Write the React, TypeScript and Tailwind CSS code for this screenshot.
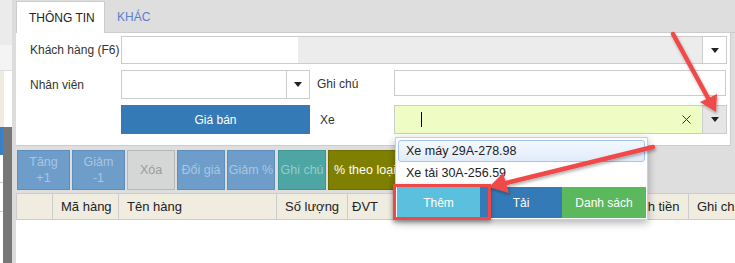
import React from 'react';

const Tri = () => (
  <svg width="8" height="5" viewBox="0 0 8 5">
    <polygon points="0,0 8,0 4,5" fill="#222" />
  </svg>
);

const tools = [
  { label: ['Tăng', '+1'], cls: 'w-[53px] bg-[#6e9dca] border-[#5e8dbc] text-[#a9c6e2]' },
  { label: ['Giảm', '-1'], cls: 'ml-[2px] w-[53px] bg-[#6e9dca] border-[#5e8dbc] text-[#a9c6e2]' },
  { label: ['Xóa'], cls: 'ml-[2px] w-[48px] bg-[#d5d6d6] border-[#b7b7b7] text-[#9b9b9b]' },
  { label: ['Đổi giá'], cls: 'ml-[2px] w-[48px] bg-[#6e9dca] border-[#5e8dbc] text-[#a9c6e2]' },
  { label: ['Giảm %'], cls: 'ml-[2px] w-[48px] bg-[#6e9dca] border-[#5e8dbc] text-[#a9c6e2]' },
  { label: ['Ghi chú'], cls: 'ml-[3px] w-[48px] bg-[#4da6a3] border-[#3e9793] text-[#95ccc9]' },
  { label: ['% theo loại'], cls: 'ml-[2px] w-[74px] bg-[#808000] border-[#6d6d00] text-white' },
];

// columns hidden behind the popup keep no caption
const cols = [
  { t: '', cls: 'w-[36px]' },
  { t: 'Mã hàng', cls: 'w-[66px] pl-[8px]' },
  { t: 'Tên hàng', cls: 'w-[158px] pl-[8px]' },
  { t: 'Số lượng', cls: 'w-[71px] pl-[8px]' },
  { t: 'ĐVT', cls: 'w-[62px] pl-[4px]' },
  { t: '', cls: 'w-[100px] pl-[8px]' },
  { t: '', cls: 'w-[100px] pl-[8px]' },
  { t: 'Thành tiền', cls: 'w-[79px] pl-[8px]' },
  { t: 'Ghi chú', cls: 'w-[80px] pl-[8px]' },
];

export default function App() {
  return (
    <div className="relative w-[735px] h-[263px] overflow-hidden bg-[#dedede] font-['Liberation_Sans',Arial,sans-serif] text-[12px] text-[#333]">
      <div className="flex h-full">
        {/* background window strip */}
        <div className="flex w-[16px] h-full shrink-0">
          <div className="flex flex-col w-[12px] h-full">
            <div className="h-[45px] bg-[#ebebeb]" />
            <div className="h-[26px] bg-[#f4f4f4] border-b border-[#dddddd]" />
            <div className="flex h-[56px]">
              <div className="w-[4px] bg-[#f0ece0]" />
              <div className="flex-1 bg-white" />
            </div>
            <div className="flex flex-1">
              <div className="flex flex-col w-[3px]">
                <div className="h-[28px] bg-[#3a7fc4]" />
                <div className="h-[28px] bg-white border-b border-[#cccccc]" />
                <div className="h-[29px] bg-white border-b border-[#cccccc]" />
                <div className="flex-1 bg-white" />
              </div>
              <div className="flex-1 bg-[#777777]" />
            </div>
          </div>
          <div className="w-[4px] h-full bg-[#dcdcdc]" />
        </div>

        {/* main */}
        <div className="flex flex-col flex-1 min-w-0">
          <div className="flex items-end h-[33px] border-b border-[#cccccc]">
            <div className="flex items-center w-[89px] h-[32px] -mb-px pl-[12px] bg-white border-t border-l border-r border-[#cccccc] text-[#222]">
              THÔNG TIN
            </div>
            <div className="flex items-center h-[31px] pl-[12px] text-[#5a80c8]">KHÁC</div>
          </div>

          <div className="w-[715px] h-[113px] bg-white border-r border-b border-[#cccccc] pl-[14px] pt-[3px]">
            <div className="flex items-center h-[28px]">
              <div className="w-[91px]">Khách hàng (F6)</div>
              <div className="flex w-[582px] h-[28px] border border-[#cccccc]">
                <div className="w-[176px] bg-white" />
                <div className="flex-1 bg-[#ececec]" />
              </div>
              <div className="flex items-center justify-center w-[24px] h-[28px] border border-l-0 border-[#cccccc] bg-white">
                <Tri />
              </div>
            </div>

            <div className="flex items-start mt-[6px] h-[29px]">
              <div className="w-[91px] h-[29px] flex items-center">Nhân viên</div>
              <div className="flex w-[189px] h-[29px] border border-[#cccccc]">
                <div className="flex-1" />
                <div className="flex items-center justify-center w-[23px] border-l border-[#cccccc]">
                  <Tri />
                </div>
              </div>
              <div className="w-[84px] h-[27px] pl-[7px] flex items-center">Ghi chú</div>
              <div className="w-[332px] h-[26px] border border-[#cccccc]" />
            </div>

            <div className="flex items-center mt-[6px] h-[29px]">
              <div className="w-[91px]" />
              <div className="flex items-center justify-center w-[189px] h-[29px] bg-[#337ab7] text-white">Giá bán</div>
              <div className="w-[84px] pl-[10px]">Xe</div>
              <div className="flex items-center w-[309px] h-[29px] bg-[#effcc4] border border-[#cccccc]">
                <div className="ml-[26px] w-px h-[15px] bg-black" />
                <div className="flex-1" />
                <svg width="9" height="9" viewBox="0 0 9 9" className="mr-[11px]">
                  <path d="M0.5 0.5 L8.5 8.5 M8.5 0.5 L0.5 8.5" stroke="#333" strokeWidth="1" />
                </svg>
              </div>
              <div className="flex items-center justify-center w-[24px] h-[29px] bg-[#e6e6e6] border border-l-0 border-[#cccccc]">
                <Tri />
              </div>
            </div>
          </div>

          <div className="flex mt-[4px] pl-[1px] h-[40px]">
            {tools.map((b, i) => (
              <div
                key={i}
                className={`flex flex-col items-center justify-center shrink-0 h-[40px] border leading-[16px] text-[12.5px] ${b.cls}`}
              >
                {b.label.map((l, j) => (
                  <div key={j} className="whitespace-nowrap">{l}</div>
                ))}
              </div>
            ))}
          </div>

          <div className="mt-[3px] flex-1 bg-white">
            <div className="flex h-[27px] bg-[#f0ece0] border-t border-b border-[#cccccc] text-[13px] text-[#222]">
              {cols.map((c, i) => (
                <div
                  key={i}
                  className={`flex items-center shrink-0 border-l border-[#cccccc] whitespace-nowrap ${c.cls}`}
                >
                  {c.t}
                </div>
              ))}
            </div>
          </div>
        </div>
      </div>

      {/* dropdown popup */}
      <div className="absolute left-[395px] top-[137px] w-[253px] h-[83px] bg-white border border-[#cfcfcf] shadow-[0_3px_8px_rgba(0,0,0,0.3)] pt-[2px]">
        <div className="mx-[2px] h-[22px] flex items-center pl-[7px] rounded-[3px] border border-[#a4c4ec] bg-gradient-to-b from-[#f3f8fe] to-[#e1ecfa] text-[#222] whitespace-nowrap text-[12.5px]">
          Xe máy 29A-278.98
        </div>
        <div className="h-[23px] flex items-center pl-[10px] text-[#222] whitespace-nowrap text-[12.5px]">Xe tải 30A-256.59</div>
        <div className="flex mt-[2px] mx-px h-[31px] text-white">
          <div className="flex items-center justify-center w-[83px] bg-[#5bc0de]">Thêm</div>
          <div className="flex items-center justify-center w-[82px] bg-[#337ab7]">Tải</div>
          <div className="flex items-center justify-center w-[84px] bg-[#5cb85c]">Danh sách</div>
        </div>
      </div>

      {/* annotation */}
      <div className="absolute left-[393px] top-[184px] w-[98px] h-[36px] border-[3px] border-[#f04848] shadow-[0_2px_4px_rgba(0,0,0,0.35)]" />
      <svg className="absolute left-0 top-0 pointer-events-none" width="735" height="263" viewBox="0 0 735 263">
        <defs>
          <filter id="sh" x="-20%" y="-20%" width="140%" height="140%">
            <feDropShadow dx="1" dy="2" stdDeviation="1.5" floodColor="#000" floodOpacity="0.3" />
          </filter>
        </defs>
        <g filter="url(#sh)" fill="#f04848" stroke="#f04848">
          <line x1="673" y1="34" x2="708" y2="98" strokeWidth="4.5" strokeLinecap="round" />
          <polygon points="700,102 717,94 716,112" strokeWidth="0" />
          <line x1="653" y1="147" x2="506" y2="183" strokeWidth="4.5" strokeLinecap="round" />
          <polygon points="503,173 509,193 489,187" strokeWidth="0" />
        </g>
      </svg>
    </div>
  );
}
